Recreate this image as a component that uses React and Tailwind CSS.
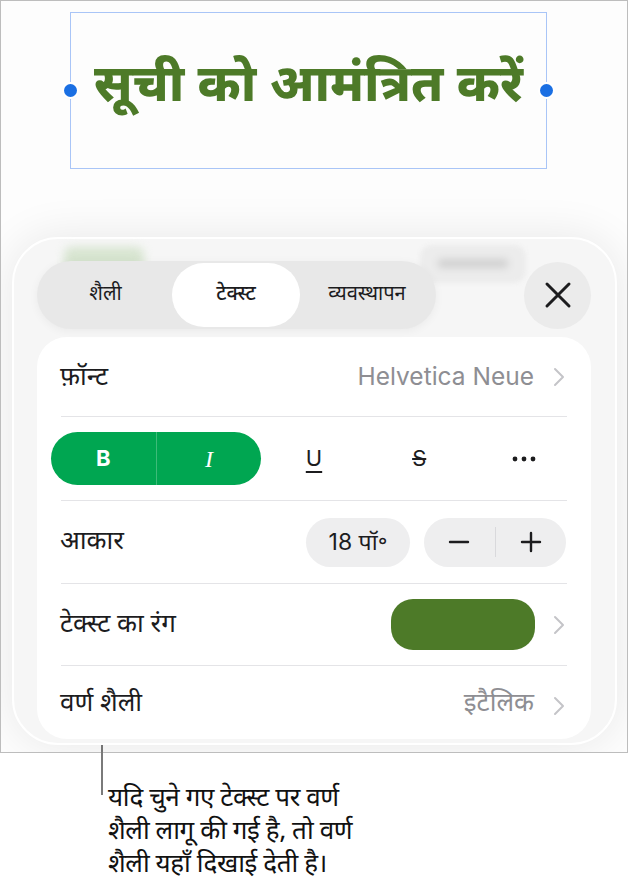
const DEV = "font-['Noto_Sans_Devanagari','Noto_Sans','Lohit_Devanagari',sans-serif]";
const LAT = "font-['Inter','Noto_Sans_Devanagari',sans-serif]";

function Chevron() {
  return (
    <svg width="12" height="20" viewBox="0 0 12 20" className="shrink-0">
      <polyline points="2,2 10,10 2,18" fill="none" stroke="#c4c4c8" strokeWidth="2" strokeLinecap="round" strokeLinejoin="round" />
    </svg>
  );
}

function Divider() {
  return <div className="mx-[24px] h-px bg-[#e4e4e7]" />;
}

export default function App() {
  return (
    <div className="w-[628px] h-[888px] bg-white">
      <div className="h-[753px] border border-[#bdbdbd] bg-[#fdfdfd] overflow-hidden">
        {/* selected title box */}
        <div className="relative mt-[11px] ml-[69px] w-[477px] h-[157px] border border-[#a9c5f7]">
          <div className={`${DEV} pt-[46px] text-center text-[51px] leading-[60px] font-[800] text-[#4d7a28] whitespace-nowrap`}>
            सूची को आमंत्रित करें
          </div>
          <span className="absolute left-[-7px] top-[71px] w-[13px] h-[13px] rounded-full bg-[#1a6fe3] ring-2 ring-white shadow" />
          <span className="absolute right-[-7px] top-[71px] w-[13px] h-[13px] rounded-full bg-[#1a6fe3] ring-2 ring-white shadow" />
        </div>

        {/* inspector panel */}
        <div className="relative mt-[68px] ml-[11px] w-[605px] h-[508px] rounded-[46px] border-2 border-white bg-[#f6f6f6] shadow-[0_0_46px_rgba(0,0,0,0.09)] pt-[22px] pl-[23px] pr-[24px] flex flex-col">
          {/* blurred content behind the controls */}
          <div className="absolute left-[50px] top-[8px] w-[80px] h-[30px] rounded-[8px] bg-[#cfe0c6] blur-[5px] opacity-80" />
          <div className="absolute left-[406px] top-[6px] w-[106px] h-[38px] rounded-[12px] bg-[#ececec] blur-[2px]">
            <div className="mx-[18px] mt-[14px] h-[9px] rounded bg-[#d0d0d0] blur-[3px]" />
          </div>

          <div className="relative flex items-center justify-between">
            <div className={`${DEV} w-[399px] h-[68px] rounded-full bg-[#e8e8e8] shadow-[0_2px_10px_rgba(0,0,0,0.05)] flex items-center p-[2px] text-[20px] text-[#1c1c1e]`}>
              <div className="w-[133px] text-center">शैली</div>
              <div className="w-[128px] h-[64px] rounded-full bg-white flex items-center justify-center font-medium">टेक्स्ट</div>
              <div className="flex-1 text-center">व्यवस्थापन</div>
            </div>
            <button className="w-[67px] h-[67px] rounded-full bg-[#ebebeb] flex items-center justify-center">
              <svg width="28" height="28" viewBox="0 0 28 28">
                <path d="M3 3 L25 25 M25 3 L3 25" stroke="#1c1c1e" strokeWidth="3" strokeLinecap="round" />
              </svg>
            </button>
          </div>

          <div className="mt-[8px] w-[554px] flex-1 mb-[4px] rounded-[30px] bg-white flex flex-col">
            <div className="h-[79px] flex items-center justify-between pl-[23px] pr-[26px]">
              <span className={`${DEV} pt-[5px] text-[26px] text-[#1c1c1e]`}>फ़ॉन्ट</span>
              <span className="flex items-center gap-[19px]">
                <span className={`${LAT} text-[24.5px] text-[#8e8e93]`}>Helvetica Neue</span>
                <Chevron />
              </span>
            </div>
            <Divider />
            <div className="h-[83px] flex items-center pl-[14px]">
              <div className="grid grid-cols-5 w-[526px] h-[53px] items-center">
                <div className="col-span-2 h-[53px] rounded-full bg-[#00a651] flex">
                  <div className={`${LAT} flex-1 flex items-center justify-center text-[22px] font-bold text-white border-r border-[#3dbb79]`}>B</div>
                  <div className="flex-1 flex items-center justify-center text-[24px] italic text-white font-['Liberation_Serif',serif]">I</div>
                </div>
                <div className={`${LAT} text-center text-[22px] text-[#1c1c1e] underline underline-offset-[5px] decoration-2`}>U</div>
                <div className={`${LAT} text-center text-[22px] text-[#1c1c1e] line-through decoration-2`}>S</div>
                <div className="flex justify-center">
                  <svg width="24" height="6" viewBox="0 0 24 6">
                    <circle cx="3" cy="3" r="2.4" fill="#1c1c1e" />
                    <circle cx="12" cy="3" r="2.4" fill="#1c1c1e" />
                    <circle cx="21" cy="3" r="2.4" fill="#1c1c1e" />
                  </svg>
                </div>
              </div>
            </div>
            <Divider />
            <div className="h-[82px] flex items-center justify-between pl-[23px] pr-[25px]">
              <span className={`${DEV} pt-[3px] text-[26px] text-[#1c1c1e]`}>आकार</span>
              <span className="flex items-center gap-[14px]">
                <span className={`${LAT} w-[104px] h-[49px] rounded-full bg-[#eeeeef] flex items-center justify-center text-[23px] text-[#1c1c1e]`}>18 पॉ॰</span>
                <span className="w-[142px] h-[49px] rounded-full bg-[#eeeeef] flex items-center">
                  <span className="flex-1 flex justify-center">
                    <svg width="22" height="22" viewBox="0 0 22 22"><path d="M2 11 H20" stroke="#1c1c1e" strokeWidth="2.4" strokeLinecap="round" /></svg>
                  </span>
                  <span className="w-px h-[30px] bg-[#d9d9dc]" />
                  <span className="flex-1 flex justify-center">
                    <svg width="22" height="22" viewBox="0 0 22 22"><path d="M2 11 H20 M11 2 V20" stroke="#1c1c1e" strokeWidth="2.4" strokeLinecap="round" /></svg>
                  </span>
                </span>
              </span>
            </div>
            <Divider />
            <div className="h-[81px] flex items-center justify-between pl-[23px] pr-[26px]">
              <span className={`${DEV} pt-[3px] text-[26px] text-[#1c1c1e]`}>टेक्स्ट का रंग</span>
              <span className="flex items-center gap-[18px]">
                <span className="w-[144px] h-[51px] rounded-[22px] bg-[#4d7a28]" />
                <Chevron />
              </span>
            </div>
            <Divider />
            <div className="flex-1 flex items-center justify-between pl-[23px] pr-[26px] pt-[6px]">
              <span className={`${DEV} text-[26px] text-[#1c1c1e]`}>वर्ण शैली</span>
              <span className="flex items-center gap-[19px]">
                <span className={`${DEV} text-[26px] text-[#8e8e93]`}>इटैलिक</span>
                <Chevron />
              </span>
            </div>
          </div>
        </div>
      </div>

      {/* callout */}
      <div className="flex">
        <div className="ml-[101px] mt-[-11px] w-[2px] h-[53px] bg-[#7a7a7a]" />
        <div className={`${DEV} ml-[5px] mt-[31px] text-[26px] leading-[33px] text-[#111] tracking-[-0.4px]`}>
          यदि चुने गए टेक्स्ट पर वर्ण<br />
          शैली लागू की गई है, तो वर्ण<br />
          शैली यहाँ दिखाई देती है।
        </div>
      </div>
    </div>
  );
}
